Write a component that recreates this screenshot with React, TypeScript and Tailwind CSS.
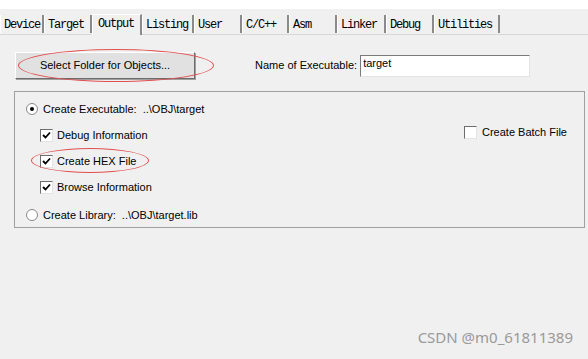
import React from 'react';

const tabs = [
  { label: 'Device', w: 44 },
  { label: 'Target', w: 48 },
  { label: 'Output', w: 50 },
  { label: 'Listing', w: 52 },
  { label: 'User', w: 48 },
  { label: 'C/C++', w: 47 },
  { label: 'Asm', w: 48 },
  { label: 'Linker', w: 49 },
  { label: 'Debug', w: 48 },
  { label: 'Utilities', w: 66 },
];

const Check = ({ checked }: { checked: boolean }) => (
  <span className="w-[13px] h-[13px] bg-white border border-t-[#6d6d6d] border-l-[#6d6d6d] border-b-[#e3e3e3] border-r-[#e3e3e3] flex items-center justify-center shrink-0">
    {checked && (
      <svg width="9" height="9" viewBox="0 0 9 9">
        <path d="M1 4 L3.5 6.5 L8 1.5" stroke="#000" strokeWidth="1.8" fill="none" />
      </svg>
    )}
  </span>
);

const Radio = ({ on }: { on: boolean }) => (
  <span className="w-[12px] h-[12px] rounded-full bg-white border border-[#8a8a8a] flex items-center justify-center shrink-0">
    {on && <span className="w-[4px] h-[4px] rounded-full bg-black" />}
  </span>
);

export default function App() {
  return (
    <div className="w-[588px] h-[359px] bg-[#f0f0f0] text-black overflow-hidden relative font-['Liberation_Sans',Arial,sans-serif]">
      <div className="h-[9px] bg-white" />
      {/* tabs */}
      <div className="h-[26px] flex items-end border-b border-[#d8d8d8] font-['Liberation_Mono',monospace] text-[12px] tracking-[-1.2px]">
        {tabs.map((t) =>
          t.label === 'Output' ? (
            <div key={t.label} style={{ width: t.w }} className="h-[21px] -mb-px bg-[#f0f0f0] border-t border-l border-white border-r-2 border-r-[#8a8a8a] px-[5px] pt-[2px] leading-[14px]">
              {t.label}
            </div>
          ) : (
            <div key={t.label} style={{ width: t.w }} className="h-[18px] mb-[1px] border-l border-white border-r-2 border-r-[#8a8a8a] bg-[#f0f0f0] pl-[3px] pt-[3px] leading-[14px]">
              {t.label}
            </div>
          )
        )}
      </div>

      <div className="px-[14px] pt-[17px]">
        <div className="flex items-center">
          <div className="relative">
            <button className="w-[180px] h-[27px] ml-[1px] bg-[#e1e1e1] border border-t-white border-l-white border-r-[#6d6d6d] border-b-[#6d6d6d] shadow-[1px_1px_0_#a0a0a0] text-[11px] text-black">
              Select Folder for Objects...
            </button>
            <span className="absolute left-[4px] top-[-3px] w-[196px] h-[33px] rounded-[50%] border border-[#e05050] pointer-events-none" />
          </div>
          <span className="ml-[60px] text-[11px]">Name of Executable:</span>
          <div className="ml-[3px] w-[170px] h-[22px] bg-white border border-t-[#7a7a7a] border-l-[#7a7a7a] border-b-[#e3e3e3] border-r-[#e3e3e3] text-[11px] pl-[2px] leading-[15px]">
            target
          </div>
        </div>

        <div className="mt-[12px] w-[571px] h-[137px] border border-[#a0a0a0] pl-[11px] pt-[10px] text-[11px] relative">
          <div className="flex items-center gap-[5px] h-[14px]">
            <Radio on />
            <span>Create Executable:&nbsp;&nbsp;..\OBJ\target</span>
          </div>
          <div className="flex items-center gap-[4px] h-[14px] mt-[12px] ml-[14px]">
            <Check checked />
            <span>Debug Information</span>
          </div>
          <div className="flex items-center gap-[4px] h-[14px] mt-[12px] ml-[14px] relative">
            <Check checked />
            <span>Create HEX File</span>
            <span className="absolute left-[-9px] top-[-6px] w-[118px] h-[25px] rounded-[50%] border border-[#e05050]" />
          </div>
          <div className="flex items-center gap-[4px] h-[14px] mt-[12px] ml-[14px]">
            <Check checked />
            <span>Browse Information</span>
          </div>
          <div className="flex items-center gap-[5px] h-[14px] mt-[14px]">
            <Radio on={false} />
            <span>Create Library:&nbsp;&nbsp;..\OBJ\target.lib</span>
          </div>
          <div className="absolute left-[449px] top-[32px] flex items-center gap-[5px]">
            <Check checked={false} />
            <span>Create Batch File</span>
          </div>
        </div>
      </div>

      <div className="absolute right-[15px] bottom-[11px] text-[15px] text-[#9a9a9a] font-['Noto_Sans',sans-serif]">
        CSDN @m0_61811389
      </div>
    </div>
  );
}
